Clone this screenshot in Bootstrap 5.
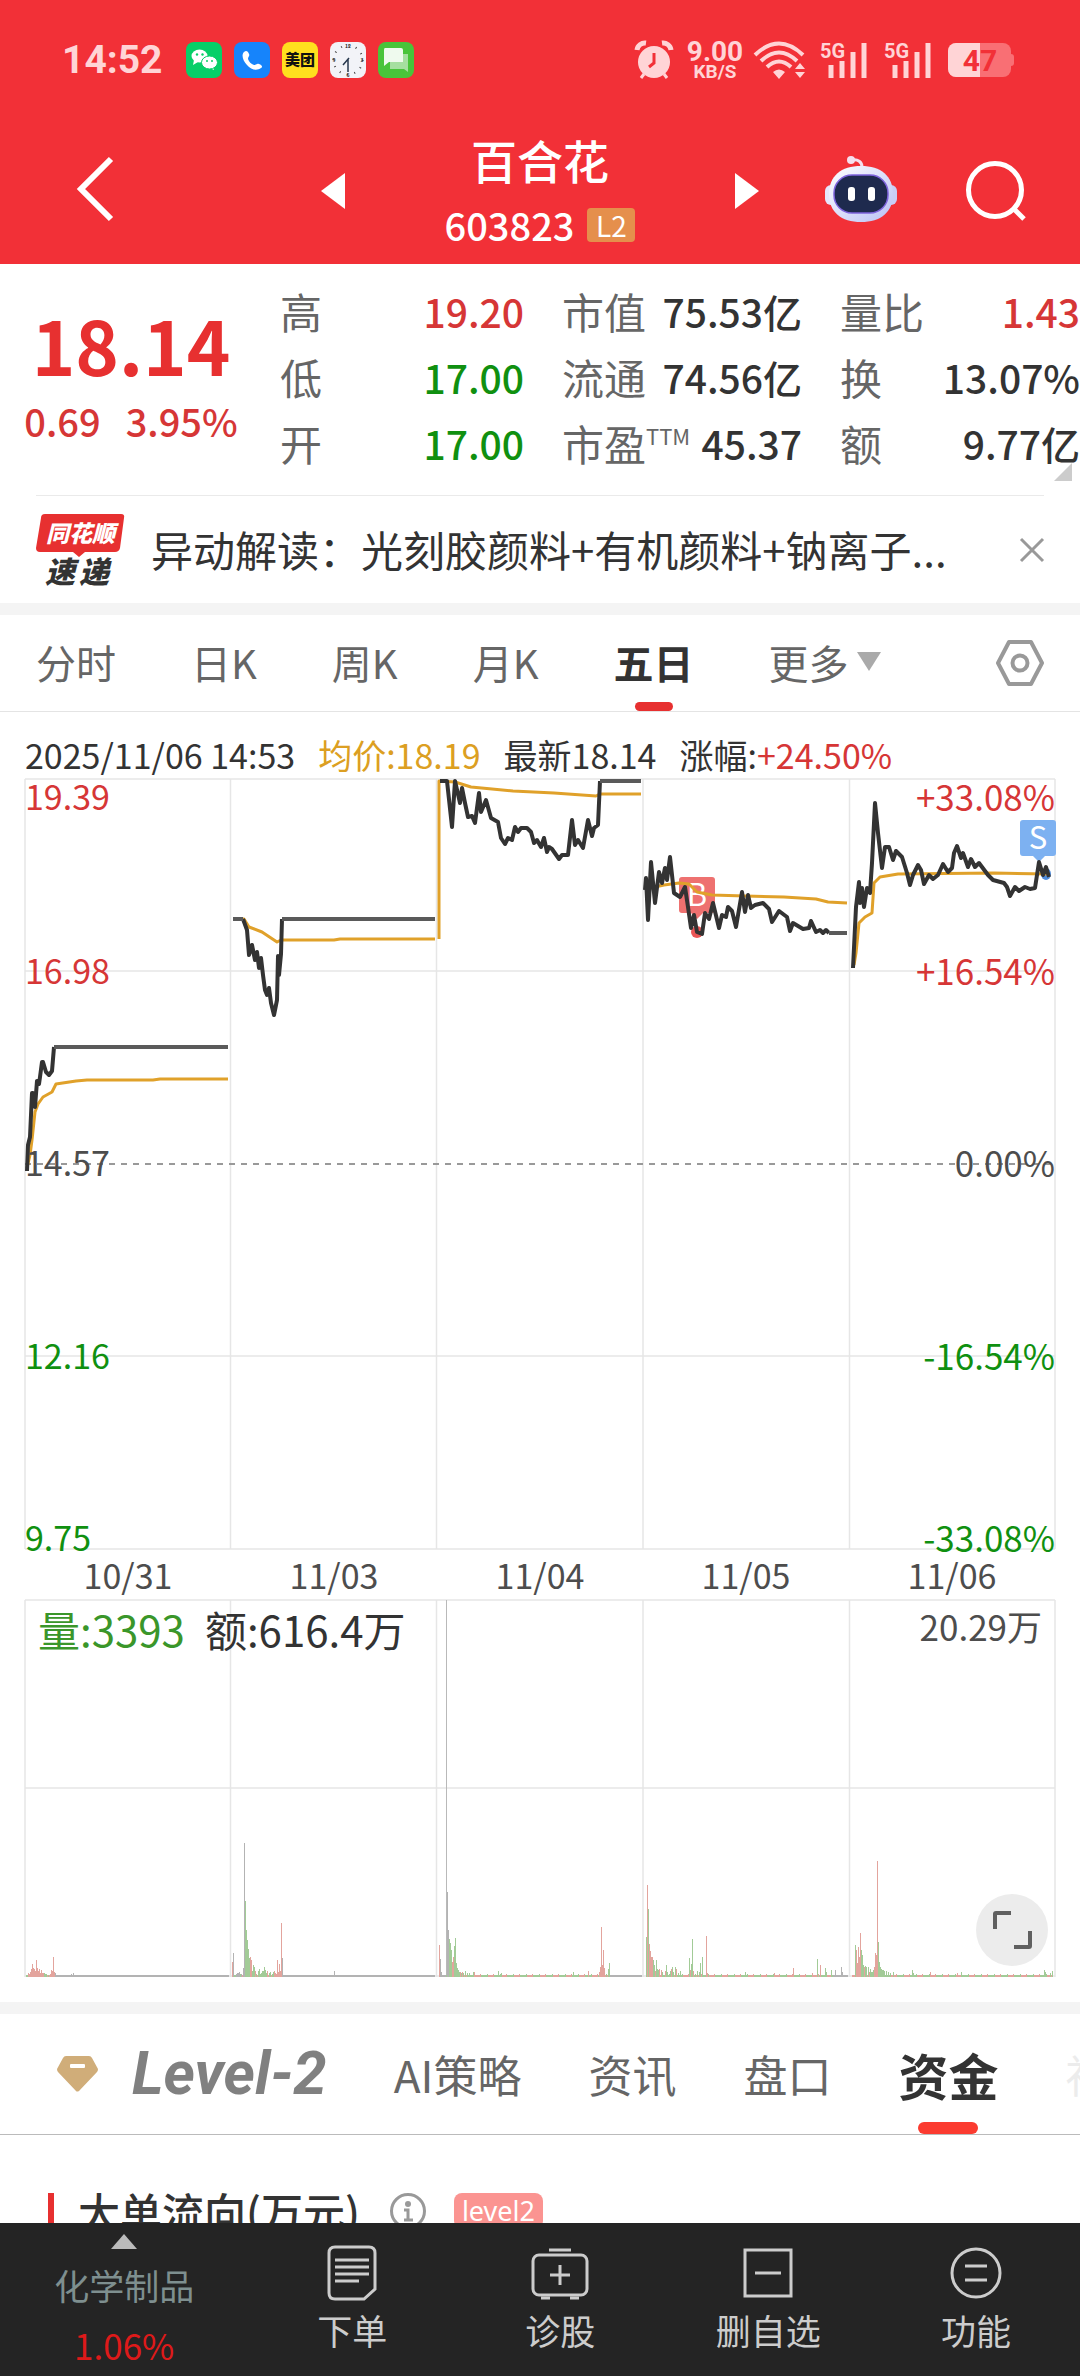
<!DOCTYPE html>
<html lang="zh-CN">
<head>
<meta charset="utf-8">
<meta name="viewport" content="width=device-width, initial-scale=1">
<title>百合花 603823</title>
<link href="https://cdn.jsdelivr.net/npm/bootstrap@5.3.0/dist/css/bootstrap.min.css" rel="stylesheet">
<script src="https://cdn.jsdelivr.net/npm/bootstrap@5.3.0/dist/js/bootstrap.bundle.min.js"></script>
<style>
  body { font-family: "Noto Sans CJK SC", sans-serif; color: #333; background: #fff; overflow-x: hidden; }
  svg { display: block; flex-shrink: 0; overflow: visible; }
  button, a { color: inherit; text-decoration: none; white-space: nowrap; }
  .plain-btn { background: none; border: 0; padding: 0; }
  .up { color: #d63636; }
  .down { color: #109010; }
  .dim { color: #666; }

  .top-area { background: #f23037; color: #fff; }
  .status-bar { padding: 40px 66px 0 62px; height: 80px; color: #ffd4d6; }
  .clock-text { font: 700 39px/40px Roboto, sans-serif; width: 124px; }
  .net-speed { font: 700 28px/24px Roboto, sans-serif; width: 60px; }
  .net-speed span { display: block; font-size: 19px; line-height: 16px; }
  .title-bar { padding: 34px 54px 0 77px; height: 184px; }
  .stock-name { font-size: 46px; font-weight: 500; line-height: 56px; padding-bottom: 6px; }
  .stock-code { font-size: 38px; font-weight: 500; line-height: 64px; }
  .title-block { padding-top: 10px; }
  .step-btn { padding-top: 4px; }
  .l2-tag { background: #e58f4c; font-size: 28px; line-height: 34px; width: 48px; border-radius: 4px; }

  .quote { padding: 14px 0 19px; }
  .price-block { width: 262px; padding-top: 21px; }
  .price { font-size: 74px; font-weight: 700; line-height: 90px; color: #e73030; }
  .change { font-size: 38px; font-weight: 500; line-height: 64px; }
  .stat-groups { gap: 38px; padding-left: 18px; }
  .stat { font-size: 42px; line-height: 66px; white-space: nowrap; }
  .stat dt { font-weight: 400; color: #666; }
  .stat dd { font-size: 39px; font-weight: 500; margin: 0; }
  .stat sup { font-size: 22px; top: -16px; line-height: 0; }
  .corner { right: 8px; bottom: 14px; }
  .news { margin: 0 36px; height: 108px; border-top: 1px solid #eaeaea; gap: 25px; font-size: 42px; }
  .news a { line-height: 60px; padding-bottom: 2px; }
  .band { height: 12px; background: #f4f4f4; }

  .period-tabs { height: 97px; padding: 0 36px; gap: 75px; border-bottom: 1px solid #e4e4e4; font-size: 40px; color: #666; }
  .period-tabs button { height: 100%; padding-bottom: 3px; }
  .info-tabs button { height: 100%; }
  .tab-on { position: relative; font-weight: 700; color: #333; }
  .tab-on::after { content: ""; position: absolute; bottom: 0; left: 50%; width: 38px; height: 9px; margin-left: -19px; border-radius: 5px; background: #e73030; }

  .chart-head { padding: 18px 25px 0; font-size: 34px; line-height: 49px; gap: 23px; white-space: nowrap; }
  .avg { color: #dc9f22; }
  .chart-wrap { margin: 0 25px; position: relative; font-size: 34px; color: #4d4d4d; }
  .chart-wrap svg { width: 100%; height: auto; }
  .axis { position: absolute; top: 0; bottom: 0; line-height: 36px; }
  .axis span { position: absolute; left: 0; transform: translateY(-50%); }
  .axis-r { right: 0; font-size: 35px; }
  .axis-r span { left: auto; right: 0; }
  .dates { font-size: 34px; line-height: 51px; margin: 0 25px; color: #4d4d4d; }
  .vol-head { position: absolute; inset: 0 13px auto; font-size: 42px; line-height: 58px; }
  .vol-head small { font-size: 35px; line-height: 52px; }
  .vol-now { color: #3a962a; }
  .expand-btn { position: absolute; right: 7px; bottom: 11px; width: 72px; height: 72px; background: #ececec; }
  .vol-wrap { margin-bottom: 25px; }

  .info-tabs { height: 121px; padding-left: 57px; gap: 67px; border-bottom: 1px solid #bbb; font-size: 44px; color: #666; overflow: hidden; }
  .info-tabs > * { flex-shrink: 0; }
  .level-name { font: italic 700 60px/64px Roboto, sans-serif; color: #808080; }
  .info-tabs .tab-on { font-size: 50px; }
  .info-tabs .tab-on::after { width: 60px; height: 12px; margin-left: -30px; border-radius: 6px; background: #fb3b30; }
  .faded { color: #ececec; }
  .flow-title { padding: 50px 48px 0; font-size: 42px; font-weight: 500; line-height: 52px; }
  .flow-title i { width: 6px; height: 36px; background: #e73030; margin-right: 24px; }
  .level-tag { font: 400 27px/36px "Noto Sans", sans-serif; color: #fff; background: #fb9491; border-radius: 8px; padding: 0 8px; margin-left: 28px; }

  .bottom-nav { height: 153px; background: #242424; color: #ccc; font-size: 35px; }
  .bottom-nav a { flex: 1 1 0; padding-top: 22px; line-height: 44px; }
  .bottom-nav a svg { margin-bottom: 7px; }
  .bottom-nav .sector { flex: 0 0 23%; padding: 11px 0 0; color: #7e8f8f; }
  .sector b { font-weight: 400; color: #dd1a1a; padding-top: 16px; }
  .sector span { padding-top: 7px; }
</style>
</head>
<body>

<header class="top-area">
  <div class="status-bar d-flex align-items-center">
    <div class="clock-text">14:52</div>
    <div class="d-flex" style="gap:12px">
      <svg width="36" height="36" viewBox="0 0 36 36"><rect width="36" height="36" rx="8" fill="#07cf68"/><ellipse cx="13.500" cy="14" rx="8" ry="6.500" fill="#fff"/><path d="M8 18l-1 5 5-3zM27 24l1 4-4-2z" fill="#fff"/><ellipse cx="23.500" cy="20.500" rx="8" ry="6.500" fill="#fff" stroke="#07cf68"/><g fill="#07cf68"><circle cx="11" cy="12.500" r="1.200"/><circle cx="16.500" cy="12.500" r="1.200"/><circle cx="21" cy="19" r="1"/><circle cx="26" cy="19" r="1"/></g></svg>
      <svg width="36" height="36" viewBox="0 0 36 36"><rect width="36" height="36" rx="8" fill="#1684fb"/><path d="M10 10c2-2 4-1 5 2 1 2-1 3-1 5 1 3 3 5 6 6 2 0 3-2 5-1 3 1 4 3 2 4-4 3-10 2-14-3-4-4-6-10-3-13z" fill="#fff"/></svg>
      <svg width="36" height="36" viewBox="0 0 36 36"><rect width="36" height="36" rx="8" fill="#ffdf1e"/><text x="18" y="23" font-size="15" font-weight="900" text-anchor="middle" fill="#111">美团</text></svg>
      <svg width="36" height="36" viewBox="0 0 36 36"><rect width="36" height="36" rx="8" fill="#f2f3f8"/><g font-size="5" font-weight="700" text-anchor="middle" fill="#222"><text x="18" y="6">12</text><text x="32" y="20">3</text><text x="18" y="35">6</text><text x="4" y="20">9</text></g><circle cx="18" cy="18" r="14.500" fill="none" stroke="#444" stroke-width="2" stroke-dasharray="1 6.590"/><path d="M18 17v13M19 16l-6 7" stroke="#28384e" stroke-width="1.500"/></svg>
      <svg width="36" height="36" viewBox="0 0 36 36"><rect width="36" height="36" rx="8" fill="#49c43a"/><path d="M12 12h18v18l-4-3H12z" fill="#a5dfa0"/><path d="M7 6h16q2 0 2 2v12H11l-5 4V8q0-2 1-2z" fill="#effaee"/></svg>
    </div>
    <div class="d-flex align-items-center ms-auto">
      <svg style="margin-right:12px" width="38" height="38" viewBox="0 0 38 38" fill="none" stroke="#ffd4d6"><circle cx="19" cy="21" r="16" fill="#ffd4d6" stroke="none"/><path d="M2 9a8 8 0 0 1 9-7M36 9a8 8 0 0 0-9-7" stroke-width="5"/><path d="M9 33l-3 4M29 33l3 4" stroke-width="3"/><path d="M19 12v10l-5 4" stroke="#f23037" stroke-width="3"/></svg>
      <div class="net-speed text-center me-2">9.00<span>KB/S</span></div>
      <svg style="margin-right:13px" width="54" height="38" viewBox="0 0 54 38" fill="none" stroke="#ffd4d6" stroke-width="4"><path d="M2 14Q26-9 50 14M8 20Q26 3 44 20M14 26Q26 15 38 26"/><path d="M20 31q6-5 12 0l-6 7zM42 28h10l-5-6zM42 31h10l-5 6z" fill="#ffd4d6" stroke="none"/></svg>
      <svg class="me-3" width="48" height="38" viewBox="0 0 48 38"><text x="0" y="17" font-family="Roboto" font-weight="700" font-size="20" fill="#ffd4d6">5G</text><path d="M11 24v13M22 20v17M33 11v26M44 2v35" stroke="#ffd4d6" stroke-width="5"/></svg>
      <svg class="me-3" width="48" height="38" viewBox="0 0 48 38"><text x="0" y="17" font-family="Roboto" font-weight="700" font-size="20" fill="#ffd4d6">5G</text><path d="M11 24v13M22 20v17M33 11v26M44 2v35" stroke="#ffd4d6" stroke-width="5"/></svg>
      <svg width="66" height="34" viewBox="0 0 66 34"><rect width="63" height="34" rx="8" fill="#f96f74"/><path d="M63 11q3 0 3 3v6q0 3-3 3z" fill="#f96f74"/><path d="M8 0h24v34H8a8 8 0 0 1-8-8V8a8 8 0 0 1 8-8z" fill="#ffd4d6"/><text x="32" y="28" font-family="Roboto" font-weight="700" font-size="30" text-anchor="middle" fill="#f23037">47</text></svg>
    </div>
  </div>
  <div class="title-bar d-flex align-items-center">
    <button class="plain-btn" aria-label="返回"><svg width="36" height="66" viewBox="0 0 36 66" fill="none" stroke="#fff" stroke-width="6"><path d="M34 3L4 33l30 30"/></svg></button>
    <button class="plain-btn step-btn" aria-label="上一只" style="margin-left:208px"><svg width="24" height="36" viewBox="0 0 24 36"><path d="M24 0v36L0 18z" fill="#fff"/></svg></button>
    <div class="title-block flex-grow-1 text-center">
      <h1 class="stock-name m-0">百合花</h1>
      <div class="d-flex justify-content-center align-items-center"><span class="stock-code">603823</span><span class="l2-tag" style="margin-left:13px">L2</span></div>
    </div>
    <button class="plain-btn step-btn" aria-label="下一只"><svg width="24" height="36" viewBox="0 0 24 36"><path d="M0 0v36l24-18z" fill="#fff"/></svg></button>
    <button class="plain-btn" aria-label="智能助手" style="margin:0 69px 0 66px"><svg width="72" height="66" viewBox="0 0 72 66"><defs><linearGradient id="shell" x1="0" y1="0" x2="1" y2="1"><stop offset="0" stop-color="#fff"/><stop offset="1" stop-color="#b9c0f5"/></linearGradient></defs><path d="M27 4c6-1 10 2 10 7" fill="none" stroke="#f5dfee" stroke-width="3"/><circle cx="26" cy="4" r="4" fill="#f5dfee"/><rect x="0" y="29" width="14" height="20" rx="6" fill="#e6e6fb"/><rect x="58" y="29" width="14" height="20" rx="6" fill="#c9cdf6"/><path d="M36 10c20 0 32 10 32 28S56 66 36 66 4 56 4 38s12-28 32-28z" fill="url(#shell)"/><rect x="9" y="19" width="54" height="38" rx="18" fill="#1e2a4e" stroke="#7d63dc" stroke-width="1.500"/><rect x="23" y="31" width="7" height="14" rx="3" fill="#fff"/><rect x="43" y="31" width="7" height="14" rx="3" fill="#fff"/></svg></button>
    <button class="plain-btn" aria-label="搜索"><svg width="60" height="60" viewBox="0 0 60 60" fill="none" stroke="#fff" stroke-width="5"><circle cx="29" cy="31" r="26.500"/><path d="M47 49l11 11"/></svg></button>
  </div>
</header>

<main>
  <section class="quote d-flex position-relative">
    <div class="price-block text-center flex-shrink-0">
      <div class="price">18.14</div>
      <div class="change up d-flex justify-content-center"><span>0.69</span><span style="margin-left:25px">3.95%</span></div>
    </div>
    <div class="stat-groups d-flex flex-grow-1">
      <dl class="stat flex-fill m-0">
        <div class="d-flex justify-content-between"><dt>高</dt><dd class="up">19.20</dd></div>
        <div class="d-flex justify-content-between"><dt>低</dt><dd class="down">17.00</dd></div>
        <div class="d-flex justify-content-between"><dt>开</dt><dd class="down">17.00</dd></div>
      </dl>
      <dl class="stat m-0" style="width:30%">
        <div class="d-flex justify-content-between"><dt>市值</dt><dd>75.53亿</dd></div>
        <div class="d-flex justify-content-between"><dt>流通</dt><dd>74.56亿</dd></div>
        <div class="d-flex justify-content-between"><dt>市盈<sup>TTM</sup></dt><dd>45.37</dd></div>
      </dl>
      <dl class="stat m-0" style="width:30%">
        <div class="d-flex justify-content-between"><dt>量比</dt><dd class="up">1.43</dd></div>
        <div class="d-flex justify-content-between"><dt>换</dt><dd>13.07%</dd></div>
        <div class="d-flex justify-content-between"><dt>额</dt><dd>9.77亿</dd></div>
      </dl>
    </div>
    <svg class="corner position-absolute" width="18" height="18" viewBox="0 0 18 18"><path d="M18 0v18H0z" fill="#ccc"/></svg>
  </section>

  <section class="news d-flex align-items-center">
    <svg width="90" height="72" viewBox="0 0 90 72" font-weight="900" font-style="italic"><path d="M9 0h76q4 0 3 4l-4 30q-1 4-5 4H49l-6 5-6-5H4q-4 0-4-4L5 4q0-4 4-4z" fill="#e73030"/><text x="10" y="28" font-size="23" fill="#fff">同花顺</text><text x="9 43" y="69" font-size="30" fill="#333">速递</text></svg>
    <a href="#" class="flex-grow-1">异动解读：光刻胶颜料+有机颜料+钠离子...</a>
    <button class="plain-btn" aria-label="关闭"><svg width="24" height="24" viewBox="0 0 24 24"><path d="M1 1l22 22M23 1L1 23" stroke="#999" stroke-width="3"/></svg></button>
  </section>
  <div class="band"></div>

  <nav class="period-tabs d-flex align-items-center">
    <button class="plain-btn">分时</button>
    <button class="plain-btn">日K</button>
    <button class="plain-btn">周K</button>
    <button class="plain-btn">月K</button>
    <button class="plain-btn tab-on">五日</button>
    <button class="plain-btn d-flex align-items-center">更多<svg class="ms-2" width="24" height="19" viewBox="0 0 24 19"><path d="M0 0h24L12 19z" fill="#aaa"/></svg></button>
    <button class="plain-btn ms-auto pb-0" aria-label="设置"><svg width="48" height="46" viewBox="0 0 48 46" fill="none" stroke="#999" stroke-width="4" stroke-linejoin="round"><path d="M13 2h22l11 21-11 21H13L2 23z"/><circle cx="24" cy="23" r="7.500"/></svg></button>
  </nav>

  <div class="chart-head d-flex">
    <span>2025/11/06 14:53</span><span class="avg">均价:18.19</span><span>最新18.14</span><span>涨幅:<span class="up">+24.50%</span></span>
  </div>

  <div class="chart-wrap">
    <svg viewBox="25 779 1030 770" fill="none" stroke-linejoin="round">
      <path d="M25 779h1030M25 971h1030M25 1356h1030M25 1549h1030M25 779v770M230.500 779v770M436.500 779v770M643 779v770M849.500 779v770M1055 779v770" stroke="#e6e6e6" stroke-width="1.500"/>
      <path d="M25 1164h1030" stroke="#999" stroke-width="2" stroke-dasharray="6 6"/>
      <path d="M682 877h30q3 0 3 3v30q0 3-3 3h-9l-6 6-6-6h-9q-3 0-3-3v-30q0-3 3-3z" fill="#ee7170"/>
      <path d="M1023 820h30q3 0 3 3v30q0 3-3 3h-8l-6 6-6-6h-10q-3 0-3-3v-30q0-3 3-3z" fill="#7db1f1"/>
      <g fill="#fff" font-size="31" text-anchor="middle"><text x="697" y="906">B</text><text x="1038" y="849">S</text></g>
      <ellipse cx="697" cy="932" rx="6" ry="6" fill="#ea5656"/><ellipse cx="1046" cy="874" rx="5" ry="6" fill="#4f8cdc"/>
      <g stroke="#e0a12a" stroke-width="3">
        <polyline points="27,1168 30,1155 32,1140 35,1112 38,1104 43,1097 52,1092 56,1084 76,1081 87,1080 153,1080 160,1079 228,1079"/>
        <polyline points="233,919 244,919 249,927 262,932 277,942 281,940 334,940 340,939 435,939"/>
        <polyline points="439,939 439,781 455,782 471,787 492,789 513,791 554,793 596,796 600,794 641,794"/>
        <polyline points="646,889 664,885 679,883 689,884 697,892 712,895 745,896 784,897 816,899 828,902 847,903"/>
        <polyline points="854,965 856,953 859,923 865,917 872,913 874,883 880,877 898,874 994,873 1048,874"/>
      </g>
      <g stroke="#333" stroke-width="4">
        <polyline points="27,1171 28,1145 30,1137 32,1093 33,1093 35,1107 37,1081 39,1084 40,1077 42,1062 43,1062 46,1072 49,1075 52,1071 54,1047"/>
        <polyline points="243,919 247,930 249,955 252,945 255,960 257,952 259,968 261,958 263,975 265,990 267,995 269,988 271,1003 274,1015 277,1000 278,956 279,975 281,954 282,919"/>
        <polyline points="440,781 447,781 452,827 455,781 460,803 462,788 465,803 468,817 472,816 475,823 479,793 481,812 486,800 491,818 498,822 501,838 505,844 508,838 512,840 515,827 518,832 521,828 527,828 531,832 534,843 537,840 541,847 544,838 547,852 549,847 552,849 559,859 562,855 568,855 572,820 575,845 578,840 583,848 588,820 592,836 594,828 598,825 600,781"/>
        <polyline points="645,890 646,878 648,920 651,862 655,903 659,872 662,883 665,868 667,880 670,857 674,893 680,897 685,887 688,907 691,928 694,915 697,932 702,934 705,913 709,919 713,903 719,928 722,915 726,917 728,907 732,911 736,927 742,892 745,912 748,895 751,908 755,905 763,903 769,909 772,922 779,911 787,917 790,931 793,923 803,929 809,928 811,921 816,932 820,930 823,933 826,930 829,933"/>
        <polyline points="853,968 856,907 859,882 860,903 862,888 864,907 867,888 870,893 872,863 875,803 878,833 882,868 885,847 889,847 893,860 896,851 902,857 907,873 910,885 913,875 918,865 921,870 924,884 929,875 933,879 938,875 943,864 948,872 952,868 954,853 957,846 961,858 963,853 968,867 971,859 975,867 979,863 988,875 993,880 1004,883 1007,887 1010,896 1015,887 1019,891 1025,887 1030,889 1035,888 1039,862 1043,875 1046,867 1049,877"/>
      </g>
      <path d="M54 1047h174M233 919h10M282 919h153M600 781h41M829 933h18" stroke="#5a5a5a" stroke-width="4"/>
    </svg>
    <div class="axis">
      <span class="up" style="top:2.250%">19.39</span><span class="up" style="top:24.750%">16.98</span><span style="top:49.750%">14.57</span><span class="down" style="top:74.750%">12.16</span><span class="down" style="top:98.500%">9.75</span>
    </div>
    <div class="axis axis-r">
      <span class="up" style="top:2.250%">+33.08%</span><span class="up" style="top:24.750%">+16.54%</span><span style="top:49.750%">0.00%</span><span class="down" style="top:74.750%">-16.54%</span><span class="down" style="top:98.500%">-33.08%</span>
    </div>
  </div>
  <div class="dates row g-0 text-center">
    <div class="col">10/31</div><div class="col">11/03</div><div class="col">11/04</div><div class="col">11/05</div><div class="col">11/06</div>
  </div>

  <div class="chart-wrap vol-wrap">
    <svg viewBox="25 1600 1030 377" id="volume">
      <path d="M25 1600h1030M25 1788h1030M25 1976h1030M25 1600v377M230.500 1600v377M436.500 1600v377M643 1600v377M849.500 1600v377M1055 1600v377" stroke="#e6e6e6" stroke-width="1.500" fill="none"/>
    </svg>
    <div class="vol-head d-flex align-items-start"><span class="vol-now">量:3393</span><span style="margin-left:20px;color:#333">额:616.4万</span><small class="ms-auto">20.29万</small></div>
    <button class="expand-btn rounded-circle border-0 p-0" aria-label="全屏"><svg viewBox="0 0 72 72" fill="none" stroke="#606060" stroke-width="4"><path d="M19 35V20q0-1 1-1h15M38 53h15q1 0 1-1V37"/></svg></button>
  </div>
  <div class="band"></div>

  <nav class="info-tabs d-flex align-items-center">
    <button class="plain-btn d-flex align-items-center"><svg width="41" height="36" viewBox="0 0 41 36"><path d="M9 0h23q2 0 3 2l6 11q0 2-1 3L22 35q-2 1-3 0L1 16q-1-1-1-3L6 2q1-2 3-2z" fill="#d0ad79"/><rect x="13" y="8" width="15" height="4" rx="1" fill="#fff"/></svg><span class="level-name" style="margin-left:34px">Level-2</span></button>
    <button class="plain-btn">AI策略</button>
    <button class="plain-btn">资讯</button>
    <button class="plain-btn">盘口</button>
    <button class="plain-btn tab-on">资金</button>
    <button class="plain-btn faded">社区</button>
  </nav>
  <div class="flow-title d-flex align-items-center"><i></i>大单流向(万元)
    <svg style="margin-left:30px" width="36" height="36" viewBox="0 0 36 36" fill="none" stroke="#999"><circle cx="18" cy="18" r="16.500" stroke-width="3"/><circle cx="18" cy="11" r="3" fill="#999" stroke="none"/><path d="M14 17h4v10M14 27h9" stroke-width="3"/></svg>
    <span class="level-tag">level2</span>
  </div>
</main>

<nav class="bottom-nav fixed-bottom d-flex text-center">
  <a href="#" class="sector d-flex flex-column align-items-center"><svg width="26" height="15" viewBox="0 0 26 15"><path d="M13 0l13 15H0z" fill="#bbb"/></svg><span>化学制品</span><b>1.06%</b></a>
  <a href="#" class="d-flex flex-column align-items-center"><svg width="50" height="56" viewBox="0 0 50 56" fill="none" stroke="#ccc" stroke-width="3"><path d="M8 2h34q6 0 6 6v36L37 54H8q-6 0-6-6V8q0-6 6-6z"/><path d="M8 15h34M8 22h34M8 29h34M8 36h24"/></svg>下单</a>
  <a href="#" class="d-flex flex-column align-items-center"><svg width="58" height="56" viewBox="0 0 58 56" fill="none" stroke="#ccc" stroke-width="3"><rect x="2" y="10" width="54" height="40" rx="6"/><path d="M18 5h22M10 53h9M39 53h9M19 30h20M29 20v20"/></svg>诊股</a>
  <a href="#" class="d-flex flex-column align-items-center"><svg width="50" height="56" viewBox="0 0 50 56" fill="none" stroke="#ccc" stroke-width="3"><path d="M2 5h46v46H2zM12 28h26"/></svg>删自选</a>
  <a href="#" class="d-flex flex-column align-items-center"><svg width="52" height="56" viewBox="0 0 52 56" fill="none" stroke="#ccc" stroke-width="3"><circle cx="26" cy="28" r="24"/><path d="M15 21h22M15 35h22"/></svg>功能</a>
</nav>

<script>
// Minute bars as x:height pairs, keyed by direction (r = up, g = down, k = flat)
const bars = {
  k: "55:4 71:3 73:4 233:24 236:3 237:4 238:4 239:5 241:3 243:9 244:134 282:19 334:6 440:18 441:5 447:85 448:47 835:7 841:10 842:5",
  r: "28:4 29:3 30:5 31:8 32:13 33:9 34:8 35:6 36:17 37:9 38:6 39:8 40:4 41:7 42:4 43:4 50:3 51:7 52:6 53:20 54:5 232:15 250:20 251:17 255:6 267:6 274:6 275:4 276:3 277:17 278:5 279:13 280:6 281:54 439:32 452:15 453:20 460:5 462:5 474:5 601:50 602:12 603:27 604:9 588:6 599:5 600:10 647:92 649:33 650:26 651:20 652:20 655:6 659:8 661:7 665:6 671:8 676:8 690:7 693:6 706:41 707:4 793:9 774:4 820:12 812:4 856:27 857:14 858:30 859:20 860:44 874:10 875:24 876:22 877:116 930:5 957:4 864:10 869:5",
  g: "44:4 46:3 48:2 245:76 246:47 247:37 248:28 249:19 252:6 253:12 254:10 256:3 258:6 259:8 260:3 261:4 262:6 263:6 264:10 265:7 266:4 269:4 270:5 272:3 273:5 449:38 450:34 451:27 454:31 455:39 456:14 457:9 458:7 459:5 461:4 463:4 465:6 467:4 469:4 473:5 498:6 501:4 573:5 609:14 608:8 606:3 646:40 648:68 653:17 654:12 656:17 657:8 658:7 662:5 666:12 667:5 670:6 672:10 673:5 675:10 678:4 680:6 689:19 691:13 692:38 697:6 699:5 700:14 702:20 745:5 817:18 825:9 826:5 831:7 855:32 861:27 862:22 863:12 865:11 866:10 868:10 870:8 871:5 872:5 873:7 878:35 879:15 880:10 881:8 882:7 883:7 884:6 886:6 888:5 890:4 893:5 912:7 913:4 961:5 1044:7 1045:5 1050:4 1052:6"
};
const fills = { k: "#b3b3b3", r: "#e3a49d", g: "#a2cb97" };
const NS = "http://www.w3.org/2000/svg";
const chart = document.getElementById("volume");
function addPath(d, fill) {
  const p = document.createElementNS(NS, "path");
  p.setAttribute("d", d);
  p.setAttribute("fill", fill);
  chart.append(p);
}
const col = (x, h) => `M${x} 1977v-${h}h1v${h}z`;
addPath("M446 1600h1v377h-1z", "#b9b9b9");
// Quiet minutes that are only a pixel or two tall
const quiet = { k: "", r: "", g: "" };
for (let x = 26; x < 1053; x++) {
  const flat = (x > 54 && x < 229) || (x > 282 && x < 446) || (x > 609 && x < 642) || (x > 832 && x < 848);
  if ([229, 230, 231, 435, 436, 437, 438, 642, 643, 644, 645, 848, 849, 850, 851].includes(x)) continue;
  const n = (x * 7919) % 13;
  quiet[flat ? "k" : n % 2 ? "r" : "g"] += col(x, flat ? 2 : 2 + (n > 10 ? 1 : 0));
}
for (const key in quiet) addPath(quiet[key], fills[key]);
for (const key in bars) addPath(bars[key].split(" ").map(s => col(...s.split(":"))).join(""), fills[key]);
</script>
</body>
</html>
